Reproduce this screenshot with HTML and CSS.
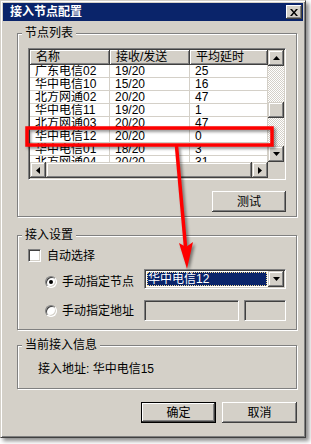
FILE: index.html
```html
<!DOCTYPE html>
<html lang="zh-CN">
<head>
<meta charset="utf-8">
<title>接入节点配置</title>
<link rel="stylesheet" href="styles.css">
</head>
<body>
<div class="window">
  <div class="titlebar">
    <span class="title">接入节点配置</span>
    <span class="close-btn"><svg width="8" height="7" viewBox="0 0 8 7"><path d="M0 0h2l2 2.4L6 0h2L5 3.5 8 7H6L4 4.6 2 7H0l3-3.5z" fill="#000"/></svg></span>
  </div>
  <div class="content">
    <fieldset class="group group-list">
      <legend>节点列表</legend>
      <div class="group-body list-body">
        <div class="listbox">
          <div class="table">
            <div class="thead">
              <div class="th">名称</div>
              <div class="th">接收/发送</div>
              <div class="th">平均延时</div>
            </div>
            <div class="tr"><div class="td">广东电信02</div><div class="td">19/20</div><div class="td">25</div></div>
            <div class="tr"><div class="td">华中电信10</div><div class="td">15/20</div><div class="td">16</div></div>
            <div class="tr"><div class="td">北方网通02</div><div class="td">20/20</div><div class="td">47</div></div>
            <div class="tr"><div class="td">华中电信11</div><div class="td">19/20</div><div class="td">1</div></div>
            <div class="tr"><div class="td">北方网通03</div><div class="td">20/20</div><div class="td">47</div></div>
            <div class="tr"><div class="td">华中电信12</div><div class="td">20/20</div><div class="td">0</div></div>
            <div class="tr"><div class="td">华中电信01</div><div class="td">18/20</div><div class="td">3</div></div>
            <div class="tr"><div class="td">北方网通04</div><div class="td">20/20</div><div class="td">31</div></div>
          </div>
          <div class="vscroll">
            <div class="sbtn"><svg width="7" height="4" viewBox="0 0 7 4"><path d="M3.5 0L7 4H0z" fill="#000"/></svg></div>
            <div class="track vtrack"><div class="thumb vthumb"></div></div>
            <div class="sbtn"><svg width="7" height="4" viewBox="0 0 7 4"><path d="M0 0h7L3.5 4z" fill="#000"/></svg></div>
          </div>
          <div class="hscroll">
            <div class="sbtn"><svg width="4" height="7" viewBox="0 0 4 7"><path d="M4 0v7L0 3.5z" fill="#000"/></svg></div>
            <div class="thumb hthumb"></div>
            <div class="sbtn"><svg width="4" height="7" viewBox="0 0 4 7"><path d="M0 0l4 3.5L0 7z" fill="#000"/></svg></div>
          </div>
          <div class="corner"></div>
        </div>
        <div class="test-row"><div class="btn btn-test">测试</div></div>
      </div>
    </fieldset>

    <fieldset class="group group-settings">
      <legend>接入设置</legend>
      <div class="check-row"><span class="checkbox"></span><span>自动选择</span></div>
      <div class="opt-row opt-node">
        <div class="opt-label low"><span class="radio checked"></span><span>手动指定节点</span></div>
        <div class="combo">
          <div class="combo-value"><span>华中电信12</span></div>
          <div class="combo-btn"><svg width="7" height="4" viewBox="0 0 7 4"><path d="M0 0h7L3.5 4z" fill="#000"/></svg></div>
        </div>
      </div>
      <div class="opt-row opt-addr">
        <div class="opt-label"><span class="radio"></span><span>手动指定地址</span></div>
        <div class="fields">
          <div class="field field-host"></div>
          <div class="field field-port"></div>
        </div>
      </div>
    </fieldset>

    <fieldset class="group group-info">
      <legend>当前接入信息</legend>
      <div class="info-body">接入地址: 华中电信15</div>
    </fieldset>

    <div class="actions">
      <div class="btn btn-default">确定</div>
      <div class="btn">取消</div>
    </div>
  </div>
</div>

<svg class="annot" width="311" height="444" viewBox="0 0 311 444">
  <g class="annot-shapes">
    <rect x="27" y="128" width="245" height="17" fill="none" stroke="#ff0000" stroke-width="3.5"/>
    <path d="M176.5 146 L185.5 247" stroke="#ff0000" stroke-width="3.5" fill="none"/>
    <path d="M179 243 L186 247 L193 242 L187 269 Z" fill="#ff0000"/>
  </g>
</svg>
</body>
</html>
```

FILE: styles.css
```css
* { box-sizing: border-box; }

html, body {
  margin: 0;
  padding: 0;
  background: #fff;
}

body {
  font-family: "Liberation Sans", "Noto Sans CJK SC", sans-serif;
  font-size: 12px;
  color: #000;
  position: relative;
  width: 311px;
  height: 444px;
  overflow: hidden;
}

.window {
  width: 306px;
  height: 438px;
  background: #d4d0c8;
  padding: 2px;
  border: 1px solid;
  border-color: #d4d0c8 #404040 #404040 #d4d0c8;
  box-shadow: inset 1px 1px #fff, inset -1px -1px #808080, 3px 3px 4px rgba(0, 0, 0, 0.45);
}

.titlebar {
  height: 18px;
  background: #0a246a;
  display: flex;
  align-items: center;
  padding: 0 1px 0 7px;
}

.title {
  flex: 1;
  color: #fff;
  font-weight: bold;
  font-size: 12px;
  line-height: 14px;
}

.close-btn {
  width: 16px;
  height: 14px;
  background: #d4d0c8;
  box-shadow: inset -1px -1px #404040, inset 1px 1px #fff, inset -2px -2px #808080;
  display: flex;
  align-items: center;
  justify-content: center;
  padding-right: 1px;
}

.close-btn svg { display: block; }

.content {
  padding: 5px 0 0 14px;
}

.group {
  margin: 0;
  width: 280px;
  border: 1px solid #808080;
  box-shadow: inset 1px 1px #fff, 1px 1px #fff;
  padding: 0;
  min-width: 0;
}

.group legend {
  margin-left: 4px;
  padding: 0 3px;
  line-height: 14px;
  font-size: 12px;
  background: #d4d0c8;
}

.group-list {
  padding: 8px 0 4px;
}

.list-body {
  padding: 0 10px;
}

/* list view */
.listbox {
  width: 258px;
  height: 132px;
  border: 1px solid;
  border-color: #808080 #fff #fff #808080;
  box-shadow: inset 1px 1px #404040, inset -1px -1px #d4d0c8;
  padding: 1px;
  display: grid;
  grid-template-columns: 238px 16px;
  grid-template-rows: 112px 16px;
  background: #fff;
}

.table {
  overflow: hidden;
  background: #fff;
}

.thead, .tr {
  display: grid;
  grid-template-columns: 80px 80px 78px;
}

.thead { height: 15px; }

.th {
  background: #d4d0c8;
  box-shadow: inset -1px -1px #404040, inset 1px 1px #fff, inset -2px -2px #808080;
  padding-left: 6px;
  line-height: 15px;
  white-space: nowrap;
  overflow: hidden;
}

.tr { height: 13px; }

.td {
  border-right: 1px solid #d4d0c8;
  border-bottom: 1px solid #d4d0c8;
  padding-left: 5px;
  line-height: 12px;
  white-space: nowrap;
  overflow: hidden;
}

.vscroll {
  display: flex;
  flex-direction: column;
}

.hscroll {
  display: flex;
}

.sbtn {
  width: 16px;
  height: 16px;
  flex: none;
  background: #d4d0c8;
  box-shadow: inset -1px -1px #404040, inset 1px 1px #d4d0c8, inset -2px -2px #808080, inset 2px 2px #fff;
  display: flex;
  align-items: center;
  justify-content: center;
}

.sbtn svg { display: block; }

.track {
  flex: 1;
  background: repeating-conic-gradient(#fff 0 25%, #d4d0c8 0 50%) 0 0 / 2px 2px;
}

.thumb {
  background: #d4d0c8;
  box-shadow: inset -1px -1px #404040, inset 1px 1px #d4d0c8, inset -2px -2px #808080, inset 2px 2px #fff;
}

.vthumb {
  height: 16px;
  margin-top: 36px;
}

.hthumb {
  flex: 1;
}

.corner {
  background: #d4d0c8;
}

/* buttons */
.btn {
  width: 75px;
  height: 21px;
  background: #d4d0c8;
  box-shadow: inset -1px -1px #404040, inset 1px 1px #fff, inset -2px -2px #808080;
  display: flex;
  align-items: center;
  justify-content: center;
  line-height: 12px;
}

.btn-default {
  box-shadow: inset 0 0 0 1px #000, inset -2px -2px #404040, inset 2px 2px #fff, inset -3px -3px #808080;
}

.test-row {
  display: flex;
  justify-content: flex-end;
  margin-top: 11px;
}

.btn-test { width: 74px; }

/* settings */
.group-settings {
  margin-top: 11px;
  padding: 6px 0 8px;
}

.check-row {
  height: 15px;
  display: flex;
  align-items: center;
  padding-left: 10px;
  line-height: 12px;
}

.checkbox {
  width: 13px;
  height: 13px;
  border: 1px solid;
  border-color: #808080 #fff #fff #808080;
  box-shadow: inset 1px 1px #404040, inset -1px -1px #d4d0c8;
  background: #fff;
  margin-right: 6px;
}

.opt-row {
  display: flex;
  padding-left: 27px;
}

.opt-node {
  margin-top: 6px;
  height: 20px;
}

.opt-addr {
  margin-top: 11px;
  height: 21px;
  align-items: center;
}

.opt-label {
  width: 99px;
  flex: none;
  display: flex;
  align-items: center;
  line-height: 12px;
  white-space: nowrap;
}

.opt-label.low {
  align-self: flex-start;
  margin-top: 7px;
  height: 12px;
}

.radio {
  width: 12px;
  height: 12px;
  border-radius: 50%;
  border: 1px solid;
  border-color: #808080 #fff #fff #808080;
  box-shadow: inset 1px 1px #404040, inset -1px -1px #d4d0c8;
  background: #fff;
  margin-right: 5px;
  display: flex;
  align-items: center;
  justify-content: center;
  flex: none;
}

.radio.checked::after {
  content: "";
  width: 4px;
  height: 4px;
  border-radius: 50%;
  background: #000;
}

.combo {
  width: 142px;
  flex: none;
  height: 20px;
  border: 1px solid;
  border-color: #808080 #fff #fff #808080;
  box-shadow: inset 1px 1px #404040, inset -1px -1px #d4d0c8;
  background: #fff;
  padding: 2px 1px 2px 2px;
  display: flex;
}

.combo-value {
  flex: 1;
  background: #0a246a;
  border: 1px dotted #f5db95;
  color: #fff;
  display: flex;
  align-items: center;
  line-height: 12px;
  margin-right: 1px;
}

.combo-btn {
  width: 16px;
  margin: -1px 0;
  background: #d4d0c8;
  box-shadow: inset -1px -1px #404040, inset 1px 1px #d4d0c8, inset -2px -2px #808080, inset 2px 2px #fff;
  display: flex;
  align-items: center;
  justify-content: center;
}

.combo-btn svg { display: block; }

.fields {
  display: flex;
  gap: 5px;
  flex: none;
}

.field {
  height: 21px;
  border: 1px solid;
  border-color: #808080 #fff #fff #808080;
  box-shadow: inset 1px 1px #404040, inset -1px -1px #d4d0c8;
  background: #d4d0c8;
}

.field-host { width: 95px; }
.field-port { width: 42px; }

/* info */
.group-info {
  margin-top: 8px;
  padding: 11px 0 13px;
}

.info-body {
  padding-left: 20px;
  line-height: 12px;
}

.actions {
  width: 280px;
  margin-top: 13px;
  display: flex;
  justify-content: flex-end;
  gap: 6px;
}

/* annotation overlay */
.annot {
  position: absolute;
  left: 0;
  top: 0;
  pointer-events: none;
}

.annot-shapes {
  filter: drop-shadow(2px 2px 1.5px rgba(0, 0, 0, 0.45));
}
```
